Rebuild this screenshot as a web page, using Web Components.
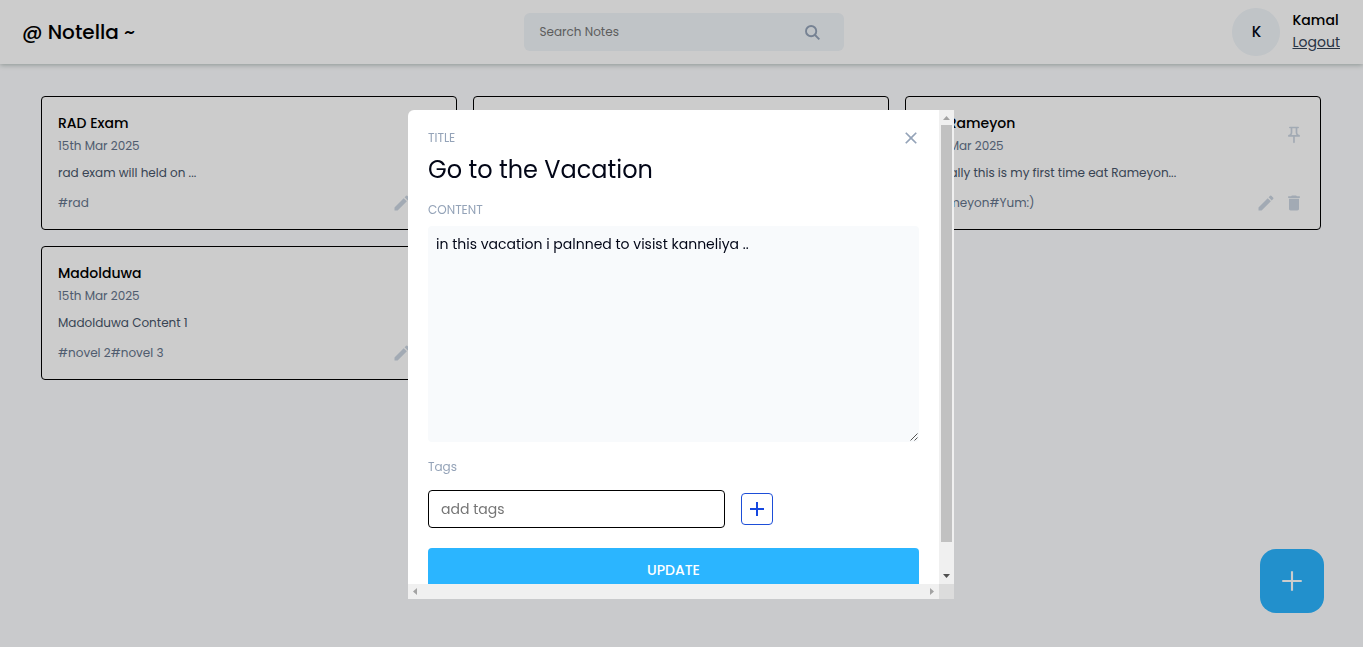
<!DOCTYPE html>
<html lang="en">
<head>
<meta charset="utf-8">
<title>Notella</title>
<style>
html,body{margin:0;height:100%;overflow:hidden}
body{background:#fcfdff;font-family:Poppins,Inter,sans-serif;color:#000}
</style>
</head>
<body>
<note-app></note-app>
<script>
const icons={
 pin:'<path d="M14 4v5c0 1.12.37 2.16 1 3H9c.65-.86 1-1.9 1-3V4h4m3-2H7c-.55 0-1 .45-1 1s.45 1 1 1h1v5c0 1.66-1.34 3-3 3v2h5.97v7l1 1 1-1v-7H19v-2c-1.66 0-3-1.34-3-3V4h1c.55 0 1-.45 1-1s-.45-1-1-1z"/>',
 edit:'<path d="M3 17.25V21h3.75L17.81 9.94l-3.75-3.75L3 17.25zM20.71 7.04a.996.996 0 0 0 0-1.41l-2.34-2.34a.996.996 0 0 0-1.41 0l-1.83 1.83 3.75 3.75 1.83-1.83z"/>',
 trash:'<path d="M6 19c0 1.1.9 2 2 2h8c1.1 0 2-.9 2-2V7H6v12zM19 4h-3.5l-1-1h-5l-1 1H5v2h14V4z"/>',
 add:'<path d="M19 13h-6v6h-2v-6H5v-2h6V5h2v6h6v2z"/>',
 'plus-thin':'<path d="M12.8 12.8v6.5h-1.6v-6.5H4.7v-1.6h6.5V4.7h1.6v6.5h6.5v1.6z"/>',
 close:'<path d="M19 6.41 17.59 5 12 10.59 6.41 5 5 6.41 10.59 12 5 17.59 6.41 19 12 13.41 17.59 19 19 17.59 13.41 12z"/>',
 search:'<g fill="none" stroke="currentColor" stroke-width="3"><circle cx="9.8" cy="9.8" r="8.2"/><path d="m15.6 15.6 7.3 7.3"/></g>'
};
const define=(name,html,setup)=>customElements.define(name,class extends HTMLElement{
 constructor(){super();this.attachShadow({mode:'open'}).innerHTML=html}
 connectedCallback(){if(setup)setup(this)}
});

define('note-icon','<style>:host{display:block;flex:none}svg{display:block;fill:currentColor}</style><svg viewBox="0 0 24 24"></svg>',e=>{
 const s=e.shadowRoot.querySelector('svg'),n=e.getAttribute('size')||20;
 s.setAttribute('width',n);s.setAttribute('height',n);s.innerHTML=icons[e.getAttribute('name')];
});

define('top-bar',`<style>
:host{display:grid;grid-template-columns:1fr 320px 1fr;align-items:center;height:64px;box-sizing:border-box;padding:0 22.5px;background:#fff;box-shadow:0 1px 5px rgba(20,50,35,.32);position:relative}
.logo{font-size:20px;font-weight:500;line-height:28px;margin-left:-.5px}
.search{display:flex;align-items:center;justify-content:space-between;height:38px;border-radius:6px;background:#f0f5f9;padding:0 24px 0 16px;box-sizing:border-box;font-size:12px;color:#757575;margin:0 -2.5px 0 2.5px}
.search span{margin-left:-.5px}
.search note-icon{color:#94a3b8}
.user{display:flex;justify-content:flex-end;align-items:center;gap:12.5px}
.av{width:48px;height:48px;border-radius:50%;background:#f0f5f9;display:grid;place-items:center;font-weight:500;font-size:15px;line-height:22px;color:#020617;padding:0 0 1px 1px;box-sizing:border-box}
.who{font-size:14px;line-height:22px;display:flex;flex-direction:column;align-items:flex-start;width:48px;padding-bottom:2px}
b{font-weight:500}a{color:#334155;text-decoration:underline}
</style>
<div class="logo">@ Notella ~</div>
<div class="search"><span>Search Notes</span><note-icon name="search" size="15"></note-icon></div>
<div class="user"><div class="av">K</div><div class="who"><b>Kamal</b><a>Logout</a></div></div>`);

define('note-card',`<style>
:host{display:block;box-sizing:border-box;height:134px;border:1px solid #000;border-radius:4px;background:#fff;padding:16px;font-size:12px;line-height:16px;color:#64748b}
.top,.foot{display:flex;justify-content:space-between;align-items:center}
.top note-icon{margin-top:2px}
.title{font-size:14px;line-height:20px;font-weight:500;color:#000}
.date{margin-top:5px}.text{margin-top:11px;color:#475569;height:16px}
.foot{margin-top:12px;height:20px}.acts{display:flex;gap:8px}note-icon{color:#cbd5e1}
</style>
<div class="top"><div><div class="title"><slot name="title"></slot></div><div class="date"><slot name="date"></slot></div></div><note-icon name="pin"></note-icon></div>
<div class="text"><slot></slot></div>
<div class="foot"><slot name="tags"></slot><div class="acts"><note-icon name="edit"></note-icon><note-icon name="trash"></note-icon></div></div>`);

define('scroll-frame',`<style>
:host{display:grid;grid-template:474px 15px/531px 15px;width:546px;height:489px}
.view{overflow:hidden;background:#fff;border-radius:6px 0 0 0}
.v,.h{background:#f0f0f0;display:flex;align-items:center;justify-content:space-between}
.v{flex-direction:column}.thumb{width:11px;height:417px;background:#c1c1c1;margin-bottom:auto}
.cell{width:15px;height:15px;display:grid;place-items:center;box-sizing:border-box}
.down{padding-bottom:2px}.left{padding-right:2px}
.corner{background:#dcdcdc}svg{display:block}
</style>
<div class="view"><slot></slot></div>
<div class="v"><div class="cell"><svg width="7" height="4"><path d="M0 4 3.5 0 7 4z" fill="#a3a3a3"/></svg></div><div class="thumb"></div><div class="cell down"><svg width="7" height="4"><path d="M0 0h7L3.5 4z" fill="#505050"/></svg></div></div>
<div class="h"><div class="cell left"><svg width="4" height="7"><path d="M4 0v7L0 3.5z" fill="#a3a3a3"/></svg></div><div class="cell"><svg width="4" height="7"><path d="M0 0v7l4-3.5z" fill="#a3a3a3"/></svg></div></div>
<div class="corner"></div>`);

define('note-editor',`<style>
:host{display:flex;flex-direction:column;padding:18px 20px 0;color:#94a3b8;font-size:12px;line-height:20px}
.head{display:flex;justify-content:space-between;align-items:center}
.head note-icon{margin-right:-2px}
.title{font-size:24px;line-height:32px;color:#020617;margin-top:6px}
.lab{margin-top:15px}
.title+.lab{margin-top:14px}
.area{height:216px;box-sizing:border-box;margin-top:6px;padding:8px;border-radius:4px;background:#f8fafc;color:#020617;font-size:14px;display:flex;justify-content:space-between}
.grip{align-self:flex-end;margin:0 -7px -7px 0}
.row{display:flex;align-items:center;gap:16px;margin-top:13px}
.input{box-sizing:border-box;width:297px;height:38px;border:1px solid #000;border-radius:4px;padding:0 12px;font-size:14px;line-height:36px;color:#757575}
.plus{width:30px;height:30px;border:1px solid #1d4ed8;border-radius:4px;display:grid;place-items:center;color:#1547e0}
.btn{margin-top:20px;height:44px;border-radius:4px;background:#2bb5ff;color:#fff;font-size:14px;font-weight:500;line-height:44px;text-align:center}
</style>
<div class="head"><span>TITLE</span><note-icon name="close"></note-icon></div>
<div class="title">Go to the Vacation</div>
<div class="lab">CONTENT</div>
<div class="area"><span>in this vacation i palnned to visist kanneliya ..</span><svg class="grip" width="8" height="8"><path d="M.5 7.5l7-7M4.5 7.5l3-3" stroke="#555" fill="none"/></svg></div>
<div class="lab">Tags</div>
<div class="row"><div class="input">add tags</div><div class="plus"><note-icon name="add" size="24"></note-icon></div></div>
<div class="btn">UPDATE</div>`);

define('add-button',`<style>:host{display:grid;place-items:center;width:64px;height:64px;border-radius:16px;background:#2bb5ff;color:#fff}</style><note-icon name="plus-thin" size="32"></note-icon>`);

define('note-app',`<style>
:host{display:block;height:100vh}
main{display:grid;grid-template-columns:repeat(3,416px);gap:16px;padding:32px 41px 0}
add-button{position:absolute;right:39px;bottom:34px}
.overlay{position:fixed;inset:0;background:rgba(0,0,0,.2)}
scroll-frame{position:absolute;left:408px;top:110px}
</style>
<top-bar></top-bar>
<main>
<note-card><span slot="title">RAD Exam</span><span slot="date">15th Mar 2025</span>rad exam will held on ...<span slot="tags">#rad</span></note-card>
<note-card></note-card>
<note-card><span slot="title">Eat Rameyon</span><span slot="date">15th Mar 2025</span>Actually this is my first time eat Rameyon...<span slot="tags">#Rameyon#Yum:)</span></note-card>
<note-card><span slot="title">Madolduwa</span><span slot="date">15th Mar 2025</span>Madolduwa Content 1<span slot="tags">#novel 2#novel 3</span></note-card>
</main>
<add-button></add-button>
<div class="overlay"><scroll-frame><note-editor></note-editor></scroll-frame></div>`);
</script>
</body>
</html>
